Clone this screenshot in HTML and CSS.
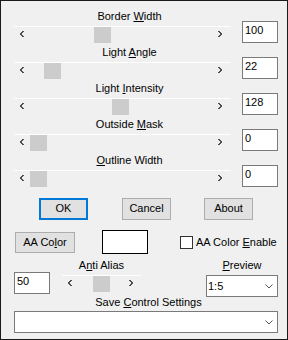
FILE: index.html
```html
<!DOCTYPE html>
<html>
<head>
<meta charset="utf-8">
<link rel="stylesheet" href="styles.css">
</head>
<body>
<div class="dialog">
  <div class="slider-row">
    <div class="slider-label">Border <u>W</u>idth</div>
    <div class="track">
      <svg class="arr arr-l" width="6" height="7" viewBox="0 0 6 7"><path d="M3 0h2v1H3zM2 1h2v1H2zM1 2h2v2H1zM2 4h2v1H2zM3 5h2v1H3z" /></svg>
      <div class="thumb" style="margin-left:69px"></div>
      <svg class="arr arr-r" width="6" height="7" viewBox="0 0 6 7"><path d="M1 0h2v1H1zM2 1h2v1H2zM3 2h2v2H3zM2 4h2v1H2zM1 5h2v1H1z" /></svg>
    </div>
    <div class="numbox">100</div>
  </div>
  <div class="slider-row">
    <div class="slider-label">Light <u>A</u>ngle</div>
    <div class="track">
      <svg class="arr arr-l" width="6" height="7" viewBox="0 0 6 7"><path d="M3 0h2v1H3zM2 1h2v1H2zM1 2h2v2H1zM2 4h2v1H2zM3 5h2v1H3z" /></svg>
      <div class="thumb" style="margin-left:19px"></div>
      <svg class="arr arr-r" width="6" height="7" viewBox="0 0 6 7"><path d="M1 0h2v1H1zM2 1h2v1H2zM3 2h2v2H3zM2 4h2v1H2zM1 5h2v1H1z" /></svg>
    </div>
    <div class="numbox">22</div>
  </div>
  <div class="slider-row">
    <div class="slider-label">Light <u>I</u>ntensity</div>
    <div class="track">
      <svg class="arr arr-l" width="6" height="7" viewBox="0 0 6 7"><path d="M3 0h2v1H3zM2 1h2v1H2zM1 2h2v2H1zM2 4h2v1H2zM3 5h2v1H3z" /></svg>
      <div class="thumb" style="margin-left:87px"></div>
      <svg class="arr arr-r" width="6" height="7" viewBox="0 0 6 7"><path d="M1 0h2v1H1zM2 1h2v1H2zM3 2h2v2H3zM2 4h2v1H2zM1 5h2v1H1z" /></svg>
    </div>
    <div class="numbox">128</div>
  </div>
  <div class="slider-row">
    <div class="slider-label">Outside <u>M</u>ask</div>
    <div class="track">
      <svg class="arr arr-l" width="6" height="7" viewBox="0 0 6 7"><path d="M3 0h2v1H3zM2 1h2v1H2zM1 2h2v2H1zM2 4h2v1H2zM3 5h2v1H3z" /></svg>
      <div class="thumb" style="margin-left:5px"></div>
      <svg class="arr arr-r" width="6" height="7" viewBox="0 0 6 7"><path d="M1 0h2v1H1zM2 1h2v1H2zM3 2h2v2H3zM2 4h2v1H2zM1 5h2v1H1z" /></svg>
    </div>
    <div class="numbox">0</div>
  </div>
  <div class="slider-row">
    <div class="slider-label"><u>O</u>utline Width</div>
    <div class="track">
      <svg class="arr arr-l" width="6" height="7" viewBox="0 0 6 7"><path d="M3 0h2v1H3zM2 1h2v1H2zM1 2h2v2H1zM2 4h2v1H2zM3 5h2v1H3z" /></svg>
      <div class="thumb" style="margin-left:5px"></div>
      <svg class="arr arr-r" width="6" height="7" viewBox="0 0 6 7"><path d="M1 0h2v1H1zM2 1h2v1H2zM3 2h2v2H3zM2 4h2v1H2zM1 5h2v1H1z" /></svg>
    </div>
    <div class="numbox">0</div>
  </div>

  <div class="button-row">
    <div class="btn btn-default btn-ok">OK</div>
    <div class="btn btn-cancel">Cancel</div>
    <div class="btn btn-about">About</div>
  </div>

  <div class="color-row">
    <div class="btn btn-color">AA Co<u>l</u>or</div>
    <div class="swatch"></div>
    <div class="checkbox"></div>
    <div class="check-label">AA Color <u>E</u>nable</div>
  </div>

  <div class="bottom-row">
    <div class="col-num">
      <div class="numbox numbox-small">50</div>
    </div>
    <div class="col-aa">
      <div class="small-label">A<u>n</u>ti Alias</div>
      <div class="track track-small">
        <svg class="arr arr-l" width="6" height="7" viewBox="0 0 6 7"><path d="M3 0h2v1H3zM2 1h2v1H2zM1 2h2v2H1zM2 4h2v1H2zM3 5h2v1H3z" /></svg>
        <div class="thumb" style="margin-left:20px"></div>
        <svg class="arr arr-r" width="6" height="7" viewBox="0 0 6 7"><path d="M1 0h2v1H1zM2 1h2v1H2zM3 2h2v2H3zM2 4h2v1H2zM1 5h2v1H1z" /></svg>
      </div>
    </div>
    <div class="col-preview">
      <div class="small-label"><u>P</u>review</div>
      <div class="select">
        <span class="select-text">1:5</span>
        <svg class="chev" width="8" height="5" viewBox="0 0 8 5"><polyline points="0.5,0.5 4,4 7.5,0.5" /></svg>
      </div>
    </div>
  </div>

  <div class="save-label">Save <u>C</u>ontrol Settings</div>
  <div class="select select-wide">
    <span class="select-text"></span>
    <svg class="chev" width="8" height="5" viewBox="0 0 8 5"><polyline points="0.5,0.5 4,4 7.5,0.5" /></svg>
  </div>
</div>
</body>
</html>
```

FILE: styles.css
```css
* {
  box-sizing: border-box;
}

html,
body {
  margin: 0;
  padding: 0;
}

body {
  width: 288px;
  height: 340px;
  background: #f0f0f0;
  font-family: "Liberation Sans", Arial, sans-serif;
  font-size: 11px;
  color: #000;
}

.dialog {
  width: 288px;
  height: 340px;
  border: 1px solid #1a1a1a;
  padding: 9px 9px 0 13px;
  background: #f0f0f0;
}

.slider-row {
  display: grid;
  grid-template-columns: 216px 36px;
  grid-template-rows: 16px 17px;
  column-gap: 12px;
  height: 36px;
}

.slider-label {
  grid-column: 1;
  grid-row: 1;
  line-height: 13px;
  padding-left: 15px;
  text-align: center;
  white-space: nowrap;
}

.track {
  grid-column: 1;
  grid-row: 2;
  border-top: 1px solid #fff;
  height: 17px;
  display: flex;
  align-items: flex-start;
}

.arr {
  display: block;
  margin-top: 4px;
  flex: none;
  shape-rendering: crispEdges;
}

.arr path {
  fill: #505050;
}

.arr-l {
  margin-left: 5px;
}

.arr-r {
  margin-left: auto;
  margin-right: 7px;
}

.thumb {
  width: 17px;
  height: 16px;
  background: #cccccc;
  flex: none;
}

.numbox {
  grid-column: 2;
  grid-row: 1 / span 2;
  margin-top: 11px;
  height: 22px;
  border: 1px solid #7a7a7a;
  background: #fff;
  padding: 2px 0 0 2px;
  line-height: 13px;
}

.button-row {
  display: flex;
  margin-top: 8px;
  height: 22px;
}

.btn {
  height: 22px;
  border: 1px solid #adadad;
  background: #e1e1e1;
  text-align: center;
  line-height: 19px;
  white-space: nowrap;
}

.btn-default {
  border: 2px solid #0078d7;
  line-height: 17px;
}

.btn-ok {
  width: 49px;
  margin-left: 25px;
}

.btn-cancel {
  width: 49px;
  margin-left: 34px;
}

.btn-about {
  width: 49px;
  margin-left: 33px;
}

.color-row {
  display: flex;
  align-items: center;
  margin-top: 10px;
  height: 24px;
}

.btn-color {
  width: 60px;
  height: 21px;
  line-height: 18px;
  margin-left: 1px;
}

.swatch {
  width: 46px;
  height: 24px;
  margin-left: 27px;
  border: 1px solid #000;
  background: #fff;
}

.checkbox {
  width: 13px;
  height: 13px;
  margin-left: 32px;
  border: 1px solid #333;
  background: #fff;
}

.check-label {
  margin-left: 3px;
  white-space: nowrap;
  line-height: 13px;
}

.bottom-row {
  display: flex;
  align-items: flex-start;
  margin-top: 5px;
  height: 37px;
}

.col-num {
  width: 36px;
  padding-top: 13px;
}

.numbox-small {
  margin-top: 0;
}

.col-aa {
  width: 79px;
  margin-left: 12px;
}

.small-label {
  line-height: 13px;
  height: 16px;
  text-align: center;
  white-space: nowrap;
}

.track-small {
  height: 17px;
}

.col-preview {
  width: 72px;
  margin-left: auto;
}

.select {
  height: 22px;
  border: 1px solid #7a7a7a;
  background: #fff;
  display: flex;
  align-items: center;
  padding: 0 4px 0 1px;
}

.select-text {
  flex: 1;
  line-height: 13px;
}

.chev {
  display: block;
  flex: none;
}

.chev polyline {
  fill: none;
  stroke: #555;
  stroke-width: 1;
}

.save-label {
  line-height: 13px;
  height: 15px;
  text-align: center;
  padding-left: 5px;
  white-space: nowrap;
}

.select-wide {
  width: 264px;
}
```
